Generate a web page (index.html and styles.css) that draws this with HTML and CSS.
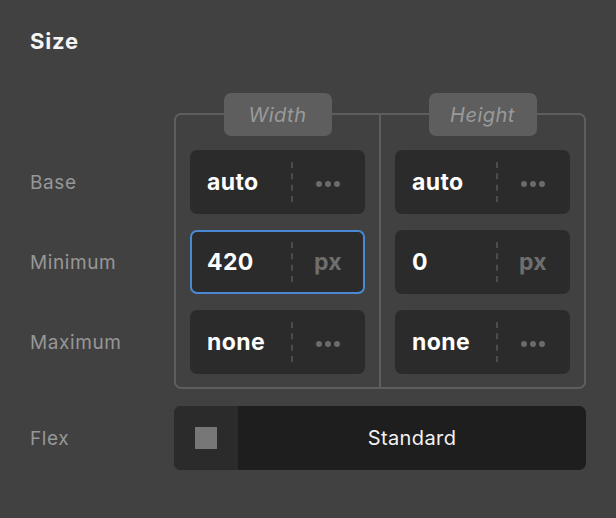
FILE: index.html
```html
<!DOCTYPE html>
<html lang="en">
<head>
  <meta charset="UTF-8" />
  <meta name="viewport" content="width=device-width, initial-scale=1.0" />
  <title>Size</title>
  <link rel="stylesheet" href="styles.css">
</head>
<body>
  <div class="panel">
    <h2 class="title">Size</h2>

    <div class="size-grid">
      <div class="labels">
        <div class="label">Base</div>
        <div class="label">Minimum</div>
        <div class="label">Maximum</div>
      </div>

      <div class="group">
        <div class="col">
          <div class="tab">Width</div>
          <div class="field">
            <span class="value">auto</span>
            <span class="unit"><span class="dots"><i></i><i></i><i></i></span></span>
          </div>
          <div class="field focused">
            <span class="value">420</span>
            <span class="unit">px</span>
          </div>
          <div class="field">
            <span class="value">none</span>
            <span class="unit"><span class="dots"><i></i><i></i><i></i></span></span>
          </div>
        </div>
        <div class="col">
          <div class="tab">Height</div>
          <div class="field">
            <span class="value">auto</span>
            <span class="unit"><span class="dots"><i></i><i></i><i></i></span></span>
          </div>
          <div class="field">
            <span class="value">0</span>
            <span class="unit">px</span>
          </div>
          <div class="field">
            <span class="value">none</span>
            <span class="unit"><span class="dots"><i></i><i></i><i></i></span></span>
          </div>
        </div>
      </div>
    </div>

    <div class="flex-row">
      <div class="label">Flex</div>
      <div class="segmented">
        <div class="seg-icon"><span class="square"></span></div>
        <div class="seg-text">Standard</div>
      </div>
    </div>
  </div>
</body>
</html>
```

FILE: styles.css
```css
body {
  margin: 0;
  background: #414141;
  font-family: "Inter", "Noto Sans", sans-serif;
  color: #fff;
}
.panel {
  padding: 27px 30px 0 30px;
}
.title {
  margin: 0;
  font-size: 22px;
  font-weight: 700;
  letter-spacing: 0.8px;
  line-height: 28px;
  color: #f4f4f4;
}
.size-grid {
  display: flex;
  margin-top: 58px;
}
.labels {
  width: 144px;
  padding-top: 37px;
  display: flex;
  flex-direction: column;
  gap: 16px;
}
.label {
  height: 64px;
  display: flex;
  align-items: center;
  font-size: 19px;
  letter-spacing: 0.6px;
  color: #979797;
}
.group {
  display: flex;
  width: 412px;
  box-sizing: border-box;
  border: 2px solid #5e5e5e;
  border-radius: 7px;
}
.col {
  flex: 1;
  display: flex;
  flex-direction: column;
  gap: 16px;
  padding: 0 14px 13px 14px;
}
.col + .col {
  border-left: 2px solid #5e5e5e;
}
.tab {
  align-self: center;
  width: 108px;
  height: 43px;
  margin: -22px 0 -2px 0;
  background: #5e5e5e;
  border-radius: 7px;
  display: flex;
  align-items: center;
  justify-content: center;
  font-style: italic;
  font-size: 20px;
  letter-spacing: 0.5px;
  color: #9a9a9a;
}
.field {
  height: 64px;
  box-sizing: border-box;
  display: flex;
  align-items: center;
  background: #2b2b2b;
  border: 2px solid transparent;
  border-radius: 7px;
}
.field.focused {
  border-color: #4a89d3;
}
.value {
  box-sizing: border-box;
  width: 101px;
  padding-left: 15px;
  font-size: 23px;
  font-weight: 700;
  letter-spacing: 0.4px;
  color: #fff;
  border-right: 2px dashed #4c4c4c;
  line-height: 40px;
}
.unit {
  flex: 1;
  text-align: center;
  font-size: 23px;
  font-weight: 700;
  letter-spacing: 0.4px;
  color: #6e6e6e;
}
.dots {
  display: inline-flex;
  gap: 3px;
  vertical-align: middle;
}
.dots i {
  width: 6px;
  height: 6px;
  border-radius: 50%;
  background: #6b6b6b;
}
.flex-row {
  display: flex;
  margin-top: 17px;
}
.flex-row .label {
  width: 144px;
}
.segmented {
  width: 412px;
  height: 64px;
  display: flex;
  border-radius: 7px;
  overflow: hidden;
  background: #1e1e1e;
}
.seg-icon {
  width: 64px;
  background: #2b2b2b;
  display: flex;
  align-items: center;
  justify-content: center;
}
.square {
  width: 22px;
  height: 22px;
  background: #777;
}
.seg-text {
  flex: 1;
  display: flex;
  align-items: center;
  justify-content: center;
  font-size: 20px;
  letter-spacing: 0.4px;
  color: #f2f2f2;
}
```
